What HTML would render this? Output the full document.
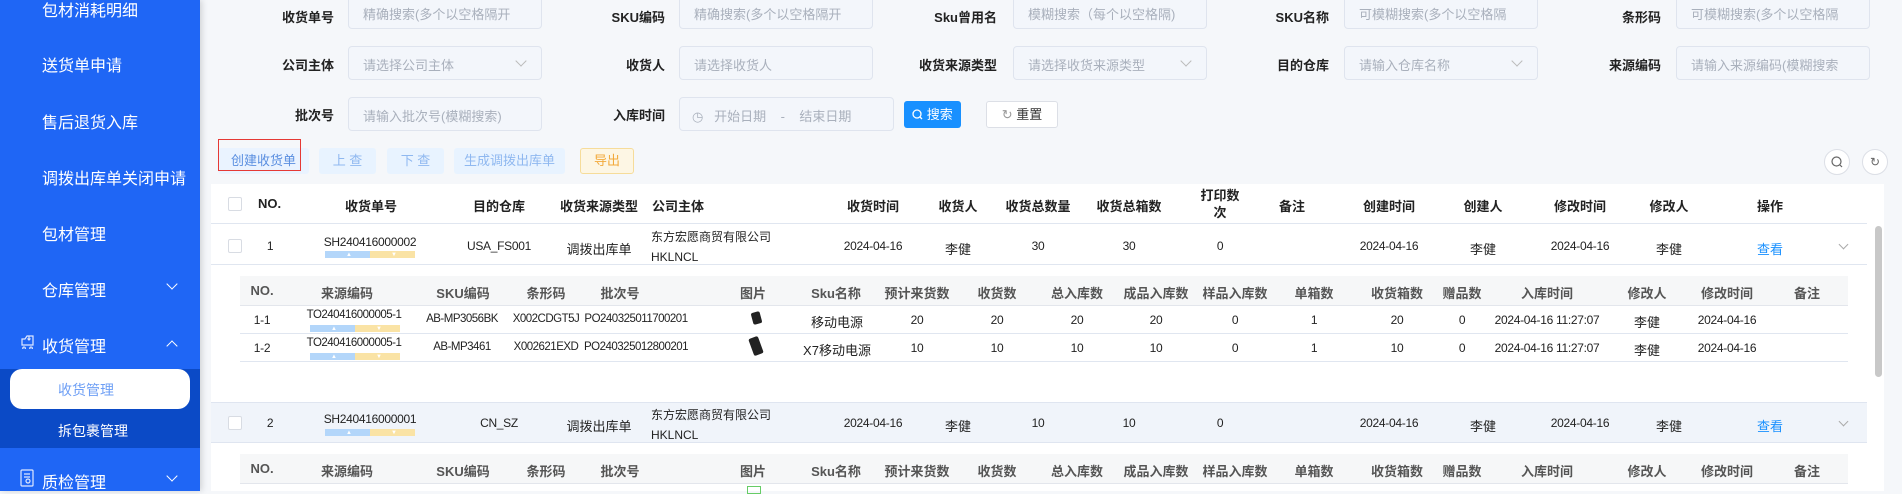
<!DOCTYPE html>
<html><head><meta charset="utf-8"><style>
*{box-sizing:border-box;margin:0;padding:0}
body{width:1902px;height:491px;overflow:hidden;background:#f5f7fa;font-family:"Liberation Sans","Noto Sans CJK SC",sans-serif;font-size:13px;color:#222;position:relative}
.a{position:absolute;white-space:nowrap}
.c{position:absolute;white-space:nowrap;transform:translateX(-50%)}
.n{font-size:12px;letter-spacing:-0.3px}
.k{font-size:11.5px;letter-spacing:-0.5px}
#sb{position:absolute;left:0;top:0;width:200px;height:491px;background:#1f66f5;box-shadow:2px 0 6px rgba(0,0,0,.15)}
.si{position:absolute;left:42px;color:#fff;font-size:16px}
.chev{position:absolute;left:168px;width:8px;height:8px;border-right:1.5px solid #fff;border-bottom:1.5px solid #fff}
.lab{position:absolute;font-weight:bold;font-size:13px;color:#222;text-align:right;width:120px}
.inp{position:absolute;height:34px;border:1px solid #dfe4ee;border-radius:4px;background:#f3f6fb;color:#a9b0bc;font-size:13px;padding:8px 14px;white-space:nowrap;overflow:hidden}
.dd::after{content:"";position:absolute;right:16px;top:10px;width:7px;height:7px;border-right:1px solid #bbb;border-bottom:1px solid #bbb;transform:rotate(45deg)}
.btn{position:absolute;top:148px;height:26px;background:#e8f3ff;color:#8fb8f0;font-size:13px;text-align:center;line-height:26px;border-radius:3px}
.th{font-weight:bold;font-size:13px;color:#222}
.sth{font-weight:bold;font-size:13px;color:#555}
.bar{position:absolute;height:7px;width:90px}
.bar .l{position:absolute;left:0;top:0;height:7px;width:50%;background:#b3d6fa}
.bar .r{position:absolute;right:0;top:0;height:7px;width:50%;background:#fae3a5}
.bar b{position:absolute;top:1px;color:#fff;font-size:6px;line-height:6px}
.cb{position:absolute;width:14px;height:14px;border:1px solid #d8dce3;border-radius:2px;background:#fff}
.hl{position:absolute;height:1px;background:#e0e6f0}
</style></head><body>
<div id="sb">
<div class="si" style="top:-3px">包材消耗明细</div>
<div class="si" style="top:52px">送货单申请</div>
<div class="si" style="top:109px">售后退货入库</div>
<div class="si" style="top:165px">调拨出库单关闭申请</div>
<div class="si" style="top:221px">包材管理</div>
<div class="si" style="top:277px">仓库管理</div><div class="chev" style="top:280px;transform:rotate(45deg)"></div>
<svg class="a" style="left:20px;top:333px" width="16" height="16" viewBox="0 0 16 16" fill="none" stroke="#dfe8ff" stroke-width="1.2"><path d="M2 6h3l2-3h6v9H2z M4 14a1.3 1.3 0 1 0 .1 0 M11 14a1.3 1.3 0 1 0 .1 0 M9 3v4M7.5 5.5 9 7l1.5-1.5"/></svg>
<div class="si" style="top:333px">收货管理</div><div class="chev" style="top:342px;transform:rotate(-135deg)"></div>
<div class="a" style="left:0;top:369px;width:200px;height:79px;background:#0b4ac6"></div>
<div class="a" style="left:10px;top:369px;width:180px;height:40px;background:#fff;border-radius:12px"></div>
<div class="a" style="left:58px;top:380px;color:#6e9ff5;font-size:14px">收货管理</div>
<div class="a" style="left:58px;top:421px;color:#fff;font-size:14px">拆包裹管理</div>
<svg class="a" style="left:20px;top:469px" width="14" height="18" viewBox="0 0 14 18" fill="none" stroke="#dfe8ff" stroke-width="1.2"><rect x="1" y="1" width="12" height="16" rx="1"/><path d="M4 5h6M4 8h6"/><circle cx="8" cy="12" r="2"/></svg>
<div class="si" style="top:469px">质检管理</div><div class="chev" style="top:472px;transform:rotate(45deg)"></div>
</div>

<div class="lab" style="left:214px;top:7px">收货单号</div><div class="inp" style="left:348px;top:-5px;width:194px">精确搜索(多个以空格隔开</div>
<div class="lab" style="left:545px;top:7px">SKU编码</div><div class="inp" style="left:679px;top:-5px;width:194px">精确搜索(多个以空格隔开</div>
<div class="lab" style="left:877px;top:7px">Sku曾用名</div><div class="inp" style="left:1013px;top:-5px;width:194px">模糊搜索（每个以空格隔)</div>
<div class="lab" style="left:1209px;top:7px">SKU名称</div><div class="inp" style="left:1344px;top:-5px;width:194px">可模糊搜索(多个以空格隔</div>
<div class="lab" style="left:1541px;top:7px">条形码</div><div class="inp" style="left:1676px;top:-5px;width:194px">可模糊搜索(多个以空格隔</div>

<div class="lab" style="left:214px;top:55px">公司主体</div><div class="inp dd" style="left:348px;top:46px;width:194px">请选择公司主体</div>
<div class="lab" style="left:545px;top:55px">收货人</div><div class="inp" style="left:679px;top:46px;width:194px">请选择收货人</div>
<div class="lab" style="left:877px;top:55px">收货来源类型</div><div class="inp dd" style="left:1013px;top:46px;width:194px">请选择收货来源类型</div>
<div class="lab" style="left:1209px;top:55px">目的仓库</div><div class="inp dd" style="left:1344px;top:46px;width:194px">请输入仓库名称</div>
<div class="lab" style="left:1541px;top:55px">来源编码</div><div class="inp" style="left:1676px;top:46px;width:194px">请输入来源编码(模糊搜索</div>

<div class="lab" style="left:214px;top:105px">批次号</div><div class="inp" style="left:348px;top:97px;width:194px">请输入批次号(模糊搜索)</div>
<div class="lab" style="left:545px;top:105px">入库时间</div><div class="inp" style="left:679px;top:97px;width:215px;padding-left:12px">◷ &nbsp; 开始日期 &nbsp;&nbsp; - &nbsp;&nbsp; 结束日期</div>
<div class="a" style="left:904px;top:101px;width:57px;height:27px;background:#1890ff;border-radius:3px;color:#fff;font-size:13px;line-height:27px;text-align:center"><svg width="11" height="11" viewBox="0 0 11 11" style="vertical-align:-1px" fill="none" stroke="#fff" stroke-width="1.3"><circle cx="5" cy="5" r="4"/><path d="M8 8l2 2"/></svg> 搜索</div>
<div class="a" style="left:986px;top:101px;width:72px;height:27px;background:#fff;border:1px solid #dcdfe6;border-radius:3px;color:#333;font-size:13px;line-height:25px;text-align:center"><span style="color:#999">↻</span> 重置</div>

<div class="btn" style="left:218px;width:91px;color:#5b8fe0;background:#eaf3ff">创建收货单</div>
<div class="a" style="left:218px;top:139px;width:83px;height:32px;border:1.5px solid #e53935"></div>
<div class="btn" style="left:319px;width:57px">上 查</div>
<div class="btn" style="left:387px;width:57px">下 查</div>
<div class="btn" style="left:454px;width:111px">生成调拨出库单</div>
<div class="btn" style="left:580px;width:54px;background:#fdf6e4;border:1px solid #f6dc9a;color:#f2a93b;line-height:24px">导出</div>
<div class="a" style="left:1824px;top:149px;width:26px;height:26px;border:1px solid #dcdfe6;border-radius:50%;background:#fff"><svg width="24" height="24" viewBox="0 0 24 24" fill="none" stroke="#666" stroke-width="1.2"><circle cx="11.5" cy="11.5" r="4.5"/><path d="M15 15l2 2"/></svg></div>
<div class="a" style="left:1862px;top:149px;width:26px;height:26px;border:1px solid #dcdfe6;border-radius:50%;background:#fff;text-align:center;line-height:24px;color:#666;font-size:12px">↻</div>

<div class="a" style="left:211px;top:184px;width:1673px;height:307px;background:#fff"></div>
<div class="cb" style="left:228px;top:197px"></div>
<div class="a th" style="left:258px;top:196px">NO.</div>
<div class="c th" style="left:371px;top:196px">收货单号</div>
<div class="c th" style="left:499px;top:196px">目的仓库</div>
<div class="c th" style="left:599px;top:196px">收货来源类型</div>
<div class="a th" style="left:652px;top:196px">公司主体</div>
<div class="c th" style="left:873px;top:196px">收货时间</div>
<div class="c th" style="left:958px;top:196px">收货人</div>
<div class="c th" style="left:1038px;top:196px">收货总数量</div>
<div class="c th" style="left:1129px;top:196px">收货总箱数</div>
<div class="c th" style="left:1220px;top:187px;text-align:center;line-height:17px">打印数<br>次</div>
<div class="c th" style="left:1292px;top:196px">备注</div>
<div class="c th" style="left:1389px;top:196px">创建时间</div>
<div class="c th" style="left:1483px;top:196px">创建人</div>
<div class="c th" style="left:1580px;top:196px">修改时间</div>
<div class="c th" style="left:1669px;top:196px">修改人</div>
<div class="c th" style="left:1770px;top:196px">操作</div>
<div class="hl" style="left:211px;top:223px;width:1656px"></div>

<div class="cb" style="left:228px;top:239px"></div>
<div class="c n" style="left:270px;top:239px">1</div>
<div class="c n" style="left:370px;top:235px">SH240416000002</div>
<div class="bar" style="left:325px;top:251px"><i class="l"></i><i class="r"></i><b style="left:21px">▲</b><b style="left:66px">▼</b></div>
<div class="c n" style="left:499px;top:239px">USA_FS001</div>
<div class="c" style="left:599px;top:239px">调拨出库单</div>
<div class="a" style="left:651px;top:227px;line-height:20px;font-size:12px">东方宏愿商贸有限公司<br>HKLNCL</div>
<div class="c n" style="left:873px;top:239px">2024-04-16</div>
<div class="c" style="left:958px;top:239px">李健</div>
<div class="c n" style="left:1038px;top:239px">30</div>
<div class="c n" style="left:1129px;top:239px">30</div>
<div class="c n" style="left:1220px;top:239px">0</div>
<div class="c n" style="left:1389px;top:239px">2024-04-16</div>
<div class="c" style="left:1483px;top:239px">李健</div>
<div class="c n" style="left:1580px;top:239px">2024-04-16</div>
<div class="c" style="left:1669px;top:239px">李健</div>
<div class="c" style="left:1770px;top:239px;color:#1890ff">查看</div>
<div class="a" style="left:1840px;top:241px;width:7px;height:7px;border-right:1px solid #aaa;border-bottom:1px solid #aaa;transform:rotate(45deg)"></div>
<div class="hl" style="left:211px;top:264px;width:1656px"></div>

<div class="a" style="left:240px;top:276px;width:1608px;height:30px;background:#f6f7f8;border-bottom:1px solid #e3e6ec"></div>
<div class="c sth" style="left:262px;top:283px">NO.</div>
<div class="c sth" style="left:347px;top:283px">来源编码</div>
<div class="c sth" style="left:463px;top:283px">SKU编码</div>
<div class="c sth" style="left:546px;top:283px">条形码</div>
<div class="c sth" style="left:620px;top:283px">批次号</div>
<div class="c sth" style="left:753px;top:283px">图片</div>
<div class="c sth" style="left:836px;top:283px">Sku名称</div>
<div class="c sth" style="left:917px;top:283px">预计来货数</div>
<div class="c sth" style="left:997px;top:283px">收货数</div>
<div class="c sth" style="left:1077px;top:283px">总入库数</div>
<div class="c sth" style="left:1156px;top:283px">成品入库数</div>
<div class="c sth" style="left:1235px;top:283px">样品入库数</div>
<div class="c sth" style="left:1314px;top:283px">单箱数</div>
<div class="c sth" style="left:1397px;top:283px">收货箱数</div>
<div class="c sth" style="left:1462px;top:283px">赠品数</div>
<div class="c sth" style="left:1547px;top:283px">入库时间</div>
<div class="c sth" style="left:1647px;top:283px">修改人</div>
<div class="c sth" style="left:1727px;top:283px">修改时间</div>
<div class="c sth" style="left:1807px;top:283px">备注</div>

<div class="c n" style="left:262px;top:313px">1-1</div>
<div class="c k" style="left:354px;top:309px">TO240416000005-1</div>
<div class="bar" style="left:310px;top:325px"><i class="l"></i><i class="r"></i><b style="left:21px">▲</b><b style="left:66px">▼</b></div>
<div class="c k" style="left:462px;top:313px">AB-MP3056BK</div>
<div class="c k" style="left:546px;top:313px">X002CDGT5J</div>
<div class="c k" style="left:636px;top:313px">PO240325011700201</div>
<div class="a" style="left:752px;top:312px;width:9px;height:12px;background:#222;border-radius:2px;transform:rotate(-15deg)"></div>
<div class="c" style="left:837px;top:312px">移动电源</div>
<div class="c n" style="left:917px;top:313px">20</div><div class="c n" style="left:997px;top:313px">20</div><div class="c n" style="left:1077px;top:313px">20</div><div class="c n" style="left:1156px;top:313px">20</div><div class="c n" style="left:1235px;top:313px">0</div><div class="c n" style="left:1314px;top:313px">1</div><div class="c n" style="left:1397px;top:313px">20</div><div class="c n" style="left:1462px;top:313px">0</div>
<div class="c n" style="left:1547px;top:313px">2024-04-16 11:27:07</div><div class="c" style="left:1647px;top:312px">李健</div><div class="c n" style="left:1727px;top:313px">2024-04-16</div>
<div class="hl" style="left:240px;top:333px;width:1608px"></div>

<div class="c n" style="left:262px;top:341px">1-2</div>
<div class="c k" style="left:354px;top:337px">TO240416000005-1</div>
<div class="bar" style="left:310px;top:353px"><i class="l"></i><i class="r"></i><b style="left:21px">▲</b><b style="left:66px">▼</b></div>
<div class="c k" style="left:462px;top:341px">AB-MP3461</div>
<div class="c k" style="left:546px;top:341px">X002621EXD</div>
<div class="c k" style="left:636px;top:341px">PO240325012800201</div>
<div class="a" style="left:751px;top:337px;width:10px;height:18px;background:#222;border-radius:2px;transform:rotate(-20deg)"></div>
<div class="c" style="left:837px;top:340px">X7移动电源</div>
<div class="c n" style="left:917px;top:341px">10</div><div class="c n" style="left:997px;top:341px">10</div><div class="c n" style="left:1077px;top:341px">10</div><div class="c n" style="left:1156px;top:341px">10</div><div class="c n" style="left:1235px;top:341px">0</div><div class="c n" style="left:1314px;top:341px">1</div><div class="c n" style="left:1397px;top:341px">10</div><div class="c n" style="left:1462px;top:341px">0</div>
<div class="c n" style="left:1547px;top:341px">2024-04-16 11:27:07</div><div class="c" style="left:1647px;top:340px">李健</div><div class="c n" style="left:1727px;top:341px">2024-04-16</div>
<div class="hl" style="left:240px;top:361px;width:1608px"></div>

<div class="a" style="left:211px;top:402px;width:1656px;height:41px;background:#f0f4fa;border-top:1px solid #dfe5f0;border-bottom:1px solid #dfe5f0"></div>
<div class="cb" style="left:228px;top:416px"></div>
<div class="c n" style="left:270px;top:416px">2</div>
<div class="c n" style="left:370px;top:412px">SH240416000001</div>
<div class="bar" style="left:325px;top:429px"><i class="l"></i><i class="r"></i><b style="left:21px">▲</b><b style="left:66px">▼</b></div>
<div class="c n" style="left:499px;top:416px">CN_SZ</div>
<div class="c" style="left:599px;top:416px">调拨出库单</div>
<div class="a" style="left:651px;top:405px;line-height:20px;font-size:12px">东方宏愿商贸有限公司<br>HKLNCL</div>
<div class="c n" style="left:873px;top:416px">2024-04-16</div>
<div class="c" style="left:958px;top:416px">李健</div>
<div class="c n" style="left:1038px;top:416px">10</div>
<div class="c n" style="left:1129px;top:416px">10</div>
<div class="c n" style="left:1220px;top:416px">0</div>
<div class="c n" style="left:1389px;top:416px">2024-04-16</div>
<div class="c" style="left:1483px;top:416px">李健</div>
<div class="c n" style="left:1580px;top:416px">2024-04-16</div>
<div class="c" style="left:1669px;top:416px">李健</div>
<div class="c" style="left:1770px;top:416px;color:#1890ff">查看</div>
<div class="a" style="left:1840px;top:418px;width:7px;height:7px;border-right:1px solid #aaa;border-bottom:1px solid #aaa;transform:rotate(45deg)"></div>

<div class="a" style="left:240px;top:454px;width:1608px;height:30px;background:#f6f7f8;border-bottom:1px solid #e3e6ec"></div>
<div class="c sth" style="left:262px;top:461px">NO.</div>
<div class="c sth" style="left:347px;top:461px">来源编码</div>
<div class="c sth" style="left:463px;top:461px">SKU编码</div>
<div class="c sth" style="left:546px;top:461px">条形码</div>
<div class="c sth" style="left:620px;top:461px">批次号</div>
<div class="c sth" style="left:753px;top:461px">图片</div>
<div class="c sth" style="left:836px;top:461px">Sku名称</div>
<div class="c sth" style="left:917px;top:461px">预计来货数</div>
<div class="c sth" style="left:997px;top:461px">收货数</div>
<div class="c sth" style="left:1077px;top:461px">总入库数</div>
<div class="c sth" style="left:1156px;top:461px">成品入库数</div>
<div class="c sth" style="left:1235px;top:461px">样品入库数</div>
<div class="c sth" style="left:1314px;top:461px">单箱数</div>
<div class="c sth" style="left:1397px;top:461px">收货箱数</div>
<div class="c sth" style="left:1462px;top:461px">赠品数</div>
<div class="c sth" style="left:1547px;top:461px">入库时间</div>
<div class="c sth" style="left:1647px;top:461px">修改人</div>
<div class="c sth" style="left:1727px;top:461px">修改时间</div>
<div class="c sth" style="left:1807px;top:461px">备注</div>
<div class="a" style="left:747px;top:486px;width:14px;height:8px;border:1px solid #6c6"></div>

<div class="a" style="left:1875px;top:226px;width:7px;height:151px;background:#c8c8c8;border-radius:4px"></div>
</body></html>
